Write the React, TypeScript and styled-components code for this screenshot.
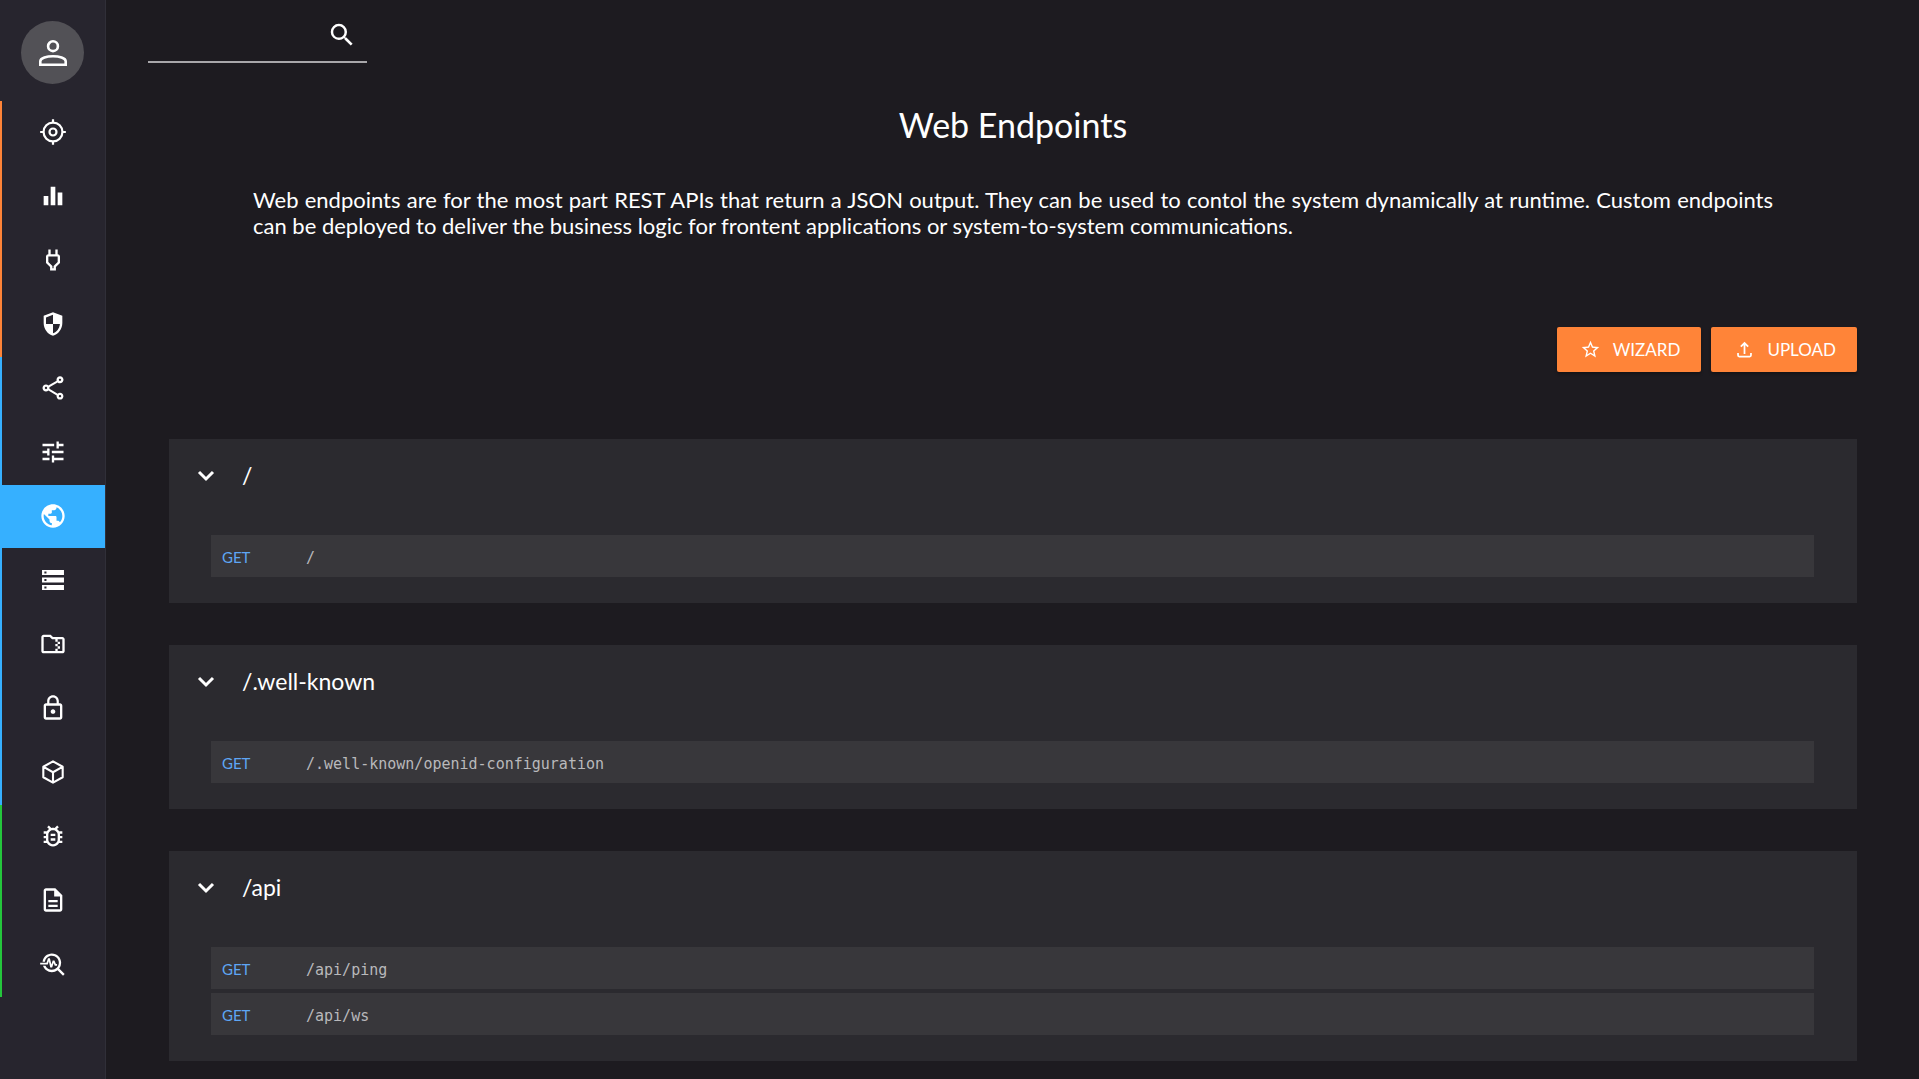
import React from "react";
import styled, { createGlobalStyle } from "styled-components";
import {
  MdEqualizer,
  MdLockOutline,
  MdOutlineBugReport,
  MdOutlineDescription,
  MdOutlineFolderZip,
  MdOutlinePower,
  MdOutlineShare,
  MdPublic,
  MdSearch,
  MdStarBorder,
  MdTroubleshoot,
  MdTune,
} from "react-icons/md";

const colors = {
  page: "#1d1b20",
  sidebar: "#27252e",
  sidebarEdge: "#302f38",
  avatar: "#525156",
  card: "#2b2a2f",
  row: "#38373b",
  orange: "#ff8438",
  blue: "#36b0ff",
  green: "#24c63c",
  method: "#5ea6f5",
  path: "#b9b9bb",
  line: "#a8a7aa",
};

const GlobalStyle = createGlobalStyle`
  *, *::before, *::after { box-sizing: border-box; }
  body {
    margin: 0;
    background: ${colors.page};
    color: #fff;
    font-family: Lato, "Open Sans", sans-serif;
  }
`;

const Shell = styled.div`
  display: flex;
  min-height: 100vh;
`;

const Sidebar = styled.aside`
  flex: 0 0 106px;
  border-right: 1px solid ${colors.sidebarEdge};
  background: ${colors.sidebar};
`;

const Avatar = styled.button`
  display: grid;
  place-items: center;
  width: 63px;
  height: 63px;
  margin: 21px 21px 17px;
  padding: 0;
  border: 0;
  border-radius: 50%;
  background: ${colors.avatar};
  color: #fff;
`;

const NavGroup = styled.nav<{ $tone: string }>`
  display: flow-root;
  border-left: 2px solid ${(p) => p.$tone};
`;

const NavLink = styled.a<{ $active?: boolean }>`
  display: grid;
  place-items: center;
  height: 63px;
  margin-bottom: 1px;
  padding: 0 2px 1px 0;
  background: ${(p) => (p.$active ? colors.blue : "transparent")};
  color: #fff;
`;

const Main = styled.main`
  flex: 1;
  min-width: 0;
  padding: 0 62px 18px 63px;
`;

const SearchBox = styled.label`
  display: flex;
  align-items: center;
  width: 219px;
  height: 63px;
  margin-left: -21px;
  padding: 8px 10px 0 0;
  border-bottom: 2px solid ${colors.line};
`;

const SearchInput = styled.input`
  flex: 1;
  min-width: 0;
  border: 0;
  outline: 0;
  background: transparent;
  color: #fff;
  font: inherit;
  font-size: 17px;
`;

const Title = styled.h1`
  margin: 41px 0 0;
  font-size: 34px;
  font-weight: 400;
  line-height: 42px;
  text-align: center;
`;

const Intro = styled.p`
  margin: 41px 84px 88px;
  font-size: 22px;
  line-height: 26px;
  text-align: justify;
`;

const Actions = styled.div`
  display: flex;
  justify-content: flex-end;
  gap: 10px;
  margin-bottom: 67px;
`;

const ActionButton = styled.button`
  display: flex;
  align-items: center;
  gap: 12px;
  height: 45px;
  padding: 0 21px 0 23px;
  border: 0;
  border-radius: 2px;
  background: ${colors.orange};
  box-shadow: 0 2px 3px rgba(0, 0, 0, 0.3);
  color: #fff;
  font: inherit;
  font-size: 17px;
`;

const Cards = styled.div`
  display: grid;
  gap: 42px;
`;

const Card = styled.section`
  padding: 0 43px 26px 42px;
  background: ${colors.card};
`;

const CardHeader = styled.h2`
  margin: 0 0 24px;
  font-size: 23px;
  font-weight: 400;
`;

const CardToggle = styled.button`
  display: flex;
  align-items: center;
  gap: 20px;
  width: 100%;
  height: 72px;
  margin-left: -21px;
  padding: 0;
  border: 0;
  background: transparent;
  color: #fff;
  font: inherit;
`;

const Endpoints = styled.ul`
  display: grid;
  gap: 4px;
  margin: 0;
  padding: 0;
  list-style: none;
`;

const Endpoint = styled.li`
  display: grid;
  grid-template-columns: 84px 1fr;
  align-items: baseline;
  height: 42px;
  padding: 2px 11px 0;
  background: ${colors.row};
  line-height: 40px;
`;

const Method = styled.span`
  color: ${colors.method};
  font-size: 15px;
`;

const Path = styled.code`
  color: ${colors.path};
  font-family: "DejaVu Sans Mono", monospace;
  font-size: 15px;
`;

const PersonIcon = () => (
  <svg width="28" height="26" viewBox="0 0 28 26" fill="none" stroke="currentColor" strokeWidth="2.6">
    <circle cx="14" cy="6.2" r="4.9" />
    <path d="M1.3 24.7V21.2C1.3 17.8 8 16.3 14 16.3s12.7 1.5 12.7 4.9v3.5z" />
  </svg>
);

const TargetIcon = () => (
  <svg width="28" height="28" viewBox="0 0 24 24" fill="none" stroke="currentColor" strokeWidth="1.9">
    <circle cx="12" cy="12" r="8.1" />
    <circle cx="12" cy="12" r="3" />
    <path d="M12 1v3M12 20v3M1 12h3M20 12h3" />
  </svg>
);

const ShieldIcon = () => (
  <svg width="28" height="28" viewBox="0 0 24 24" fill="currentColor" fillRule="evenodd">
    <path d="M12 2 4 5v6.09c0 5.05 3.41 9.76 8 10.91 4.59-1.15 8-5.86 8-10.91V5zM12 4.14V12H6.06C6 11.7 6 11.4 6 11.09v-4.7zM12 12h5.94c-.4 3.8-2.8 7-5.94 7.94z" />
  </svg>
);

const ServerIcon = () => (
  <svg width="28" height="28" viewBox="0 0 24 24" fill="currentColor" fillRule="evenodd">
    <path d="M2.6 3.4h18.8v4.4H2.6zM4.6 4.7v1.8h1.8V4.7zM2.6 9.8h18.8v4.4H2.6zM4.6 11.1v1.8h1.8v-1.8zM2.6 16.2h18.8v4.4H2.6zM4.6 17.5v1.8h1.8v-1.8z" />
  </svg>
);

const CubeIcon = () => (
  <svg width="28" height="28" viewBox="0 0 24 24" fill="none" stroke="currentColor" strokeWidth="1.8" strokeLinejoin="round">
    <path d="M12 2.9 20.3 7.5v9L12 21.1 3.7 16.5v-9zM3.9 7.6 12 12.2l8.1-4.6M12 12.2V21" />
  </svg>
);

const UploadIcon = () => (
  <svg width="21" height="21" viewBox="0 0 24 24" fill="none" stroke="currentColor" strokeWidth="2">
    <path d="M12 17V5M7.8 8.8 12 4.6l4.2 4.2M4.6 16v2.6c0 .8.6 1.4 1.4 1.4h12c.8 0 1.4-.6 1.4-1.4V16" />
  </svg>
);

const ChevronIcon = () => (
  <svg width="32" height="32" viewBox="0 0 32 32" fill="none" stroke="currentColor" strokeWidth="3">
    <path d="M9 13l7 7 7-7" />
  </svg>
);

type NavItem = { label: string; icon: React.ReactNode; active?: boolean };

const navGroups: { tone: string; items: NavItem[] }[] = [
  {
    tone: colors.orange,
    items: [
      { label: "Overview", icon: <TargetIcon /> },
      { label: "Metrics", icon: <MdEqualizer size={28} /> },
      { label: "Connectors", icon: <MdOutlinePower size={28} /> },
      { label: "Security", icon: <ShieldIcon /> },
    ],
  },
  {
    tone: colors.blue,
    items: [
      { label: "Flows", icon: <MdOutlineShare size={28} /> },
      { label: "Settings", icon: <MdTune size={28} /> },
      { label: "Web endpoints", icon: <MdPublic size={28} />, active: true },
      { label: "Storage", icon: <ServerIcon /> },
      { label: "Archives", icon: <MdOutlineFolderZip size={28} /> },
      { label: "Secrets", icon: <MdLockOutline size={28} /> },
      { label: "Packages", icon: <CubeIcon /> },
    ],
  },
  {
    tone: colors.green,
    items: [
      { label: "Debug", icon: <MdOutlineBugReport size={28} /> },
      { label: "Logs", icon: <MdOutlineDescription size={28} /> },
      { label: "Diagnostics", icon: <MdTroubleshoot size={28} /> },
    ],
  },
];

const endpointGroups = [
  { base: "/", endpoints: [{ method: "GET", path: "/" }] },
  { base: "/.well-known", endpoints: [{ method: "GET", path: "/.well-known/openid-configuration" }] },
  {
    base: "/api",
    endpoints: [
      { method: "GET", path: "/api/ping" },
      { method: "GET", path: "/api/ws" },
    ],
  },
];

export default function App() {
  return (
    <Shell>
      <GlobalStyle />
      <Sidebar>
        <Avatar aria-label="Account">
          <PersonIcon />
        </Avatar>
        {navGroups.map((group) => (
          <NavGroup key={group.tone} $tone={group.tone}>
            {group.items.map((item) => (
              <NavLink key={item.label} href="#" aria-label={item.label} $active={item.active}>
                {item.icon}
              </NavLink>
            ))}
          </NavGroup>
        ))}
      </Sidebar>
      <Main>
        <SearchBox>
          <SearchInput type="text" aria-label="Search" />
          <MdSearch size={30} />
        </SearchBox>
        <Title>Web Endpoints</Title>
        <Intro>
          Web endpoints are for the most part REST APIs that return a JSON output. They can be used to contol the
          system dynamically at runtime. Custom endpoints can be deployed to deliver the business logic for frontent
          applications or system-to-system communications.
        </Intro>
        <Actions>
          <ActionButton>
            <MdStarBorder size={21} />
            WIZARD
          </ActionButton>
          <ActionButton>
            <UploadIcon />
            UPLOAD
          </ActionButton>
        </Actions>
        <Cards>
          {endpointGroups.map((group) => (
            <Card key={group.base}>
              <CardHeader>
                <CardToggle aria-expanded="true">
                  <ChevronIcon />
                  {group.base}
                </CardToggle>
              </CardHeader>
              <Endpoints>
                {group.endpoints.map((endpoint) => (
                  <Endpoint key={endpoint.path}>
                    <Method>{endpoint.method}</Method>
                    <Path>{endpoint.path}</Path>
                  </Endpoint>
                ))}
              </Endpoints>
            </Card>
          ))}
        </Cards>
      </Main>
    </Shell>
  );
}
